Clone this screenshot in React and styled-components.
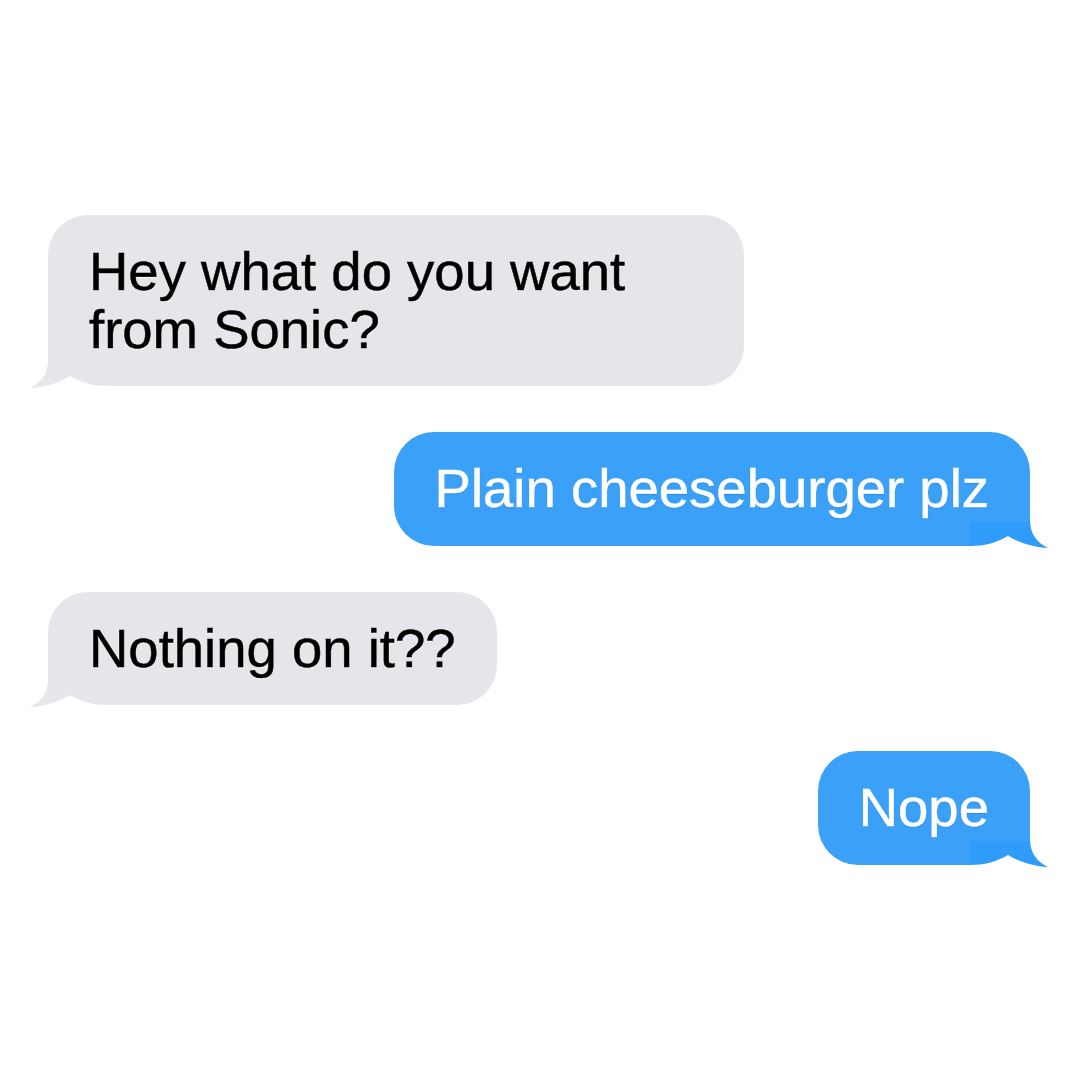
import React from "react";
import styled, { createGlobalStyle } from "styled-components";

const GlobalStyle = createGlobalStyle`
  html, body { margin: 0; padding: 0; background: #ffffff; }
  body { font-family: "Liberation Sans", Arial, Helvetica, sans-serif; }
`;

const Thread = styled.main`
  box-sizing: border-box;
  width: 1080px;
  min-height: 1080px;
  padding: 0 50px 0 48px;
  display: flex;
  flex-direction: column;
  justify-content: center;
  gap: 46px;
  background: #ffffff;
`;

const Row = styled.div`
  display: flex;
  justify-content: ${(p) => (p.$me ? "flex-end" : "flex-start")};
`;

const Bubble = styled.div`
  position: relative;
  box-sizing: border-box;
  max-width: 696px;
  padding: 28px 41px;
  border-radius: 40px;
  background: ${(p) => (p.$me ? "#3ba0f8" : "#e5e5ea")};
  color: ${(p) => (p.$me ? "#ffffff" : "#000000")};
  font-size: 54.5px;
  line-height: 57.5px;
  -webkit-text-stroke: 0.5px currentColor;
  text-shadow: ${(p) =>
    p.$me ? "0 1px 1px rgba(20, 105, 200, 0.45)" : "0 1px 1px rgba(255, 255, 255, 0.9)"};
`;

const Text = styled.span`
  position: relative;
  z-index: 1;
`;

const TailSvg = styled.svg`
  position: absolute;
  z-index: 0;
  bottom: -4px;
  width: 80px;
  height: 52px;
  ${(p) => (p.$me ? "right: -20px; transform: scaleX(-1);" : "left: -20px;")}
`;

function Tail({ me }) {
  const id = me ? "tail-me" : "tail-them";
  const main = me ? "#3ba0f8" : "#e5e5ea";
  const patch = me ? "#2f9cf9" : "#e6e6eb";
  return (
    <TailSvg $me={me} viewBox="0 0 80 52" aria-hidden="true">
      <defs>
        <linearGradient id={id} x1="0" y1="0" x2="0" y2="52" gradientUnits="userSpaceOnUse">
          <stop offset="0.46" stopColor={main} />
          <stop offset="0.46" stopColor={patch} />
        </linearGradient>
      </defs>
      <rect x="20" y="8" width="60" height="42" fill="#ffffff" />
      <path
        d="M20 0 H80 V48 C66 48 54 45 42 38 C31 45 16 49.5 2 50 C12 45 20 37 20 22 Z"
        fill={`url(#${id})`}
      />
    </TailSvg>
  );
}

const messages = [
  { me: false, text: "Hey what do you want from Sonic?" },
  { me: true, text: "Plain cheeseburger plz" },
  { me: false, text: "Nothing on it??" },
  { me: true, text: "Nope" },
];

export default function App() {
  return (
    <>
      <GlobalStyle />
      <Thread>
        {messages.map((m, i) => (
          <Row key={i} $me={m.me}>
            <Bubble $me={m.me}>
              <Tail me={m.me} />
              <Text>{m.text}</Text>
            </Bubble>
          </Row>
        ))}
      </Thread>
    </>
  );
}
